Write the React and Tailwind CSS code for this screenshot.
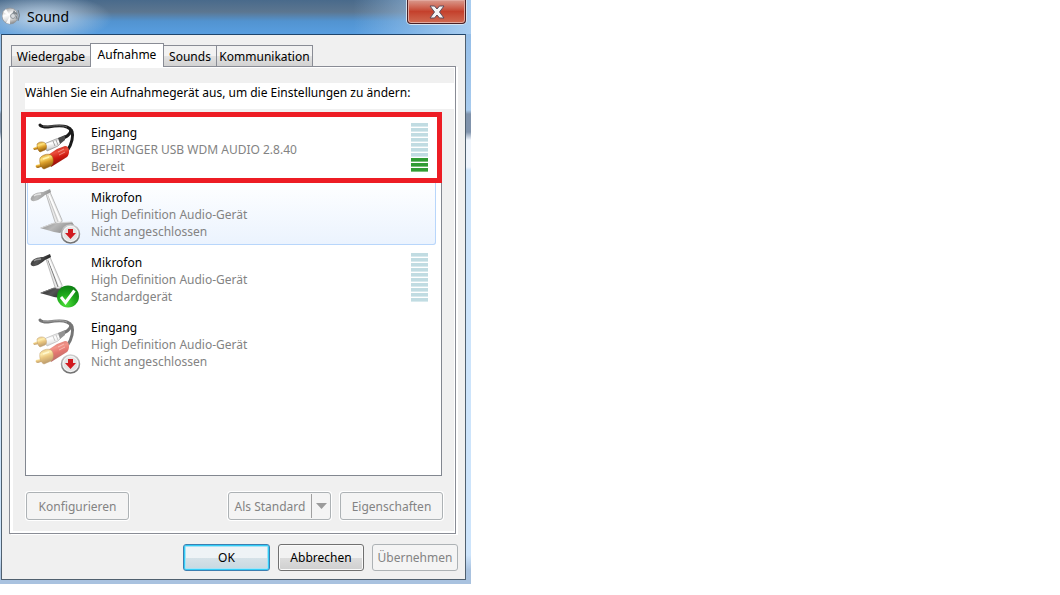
import { useState } from "react";

const TABS = [
  { id: "playback", label: "Wiedergabe", width: "w-[80px]" },
  { id: "recording", label: "Aufnahme", width: "w-[74px]" },
  { id: "sounds", label: "Sounds", width: "w-[54px]" },
  { id: "communication", label: "Kommunikation", width: "w-[97px]" },
];

const DEVICES = [
  { id: 1, name: "Eingang", driver: "BEHRINGER USB WDM AUDIO 2.8.40", status: "Bereit", icon: "line", level: 3, marked: true },
  { id: 2, name: "Mikrofon", driver: "High Definition Audio-Gerät", status: "Nicht angeschlossen", icon: "mic", badge: "unplugged", selected: true },
  { id: 3, name: "Mikrofon", driver: "High Definition Audio-Gerät", status: "Standardgerät", icon: "mic", badge: "default", level: 0 },
  { id: 4, name: "Eingang", driver: "High Definition Audio-Gerät", status: "Nicht angeschlossen", icon: "line", badge: "unplugged" },
];

const Gradients = () => (
  <svg width="0" height="0" className="absolute" aria-hidden="true">
    <defs>
      <linearGradient id="gold" x1="0" y1="0" x2="0.3" y2="1">
        <stop offset="0" stopColor="#c98a1c" />
        <stop offset="0.35" stopColor="#ffe27a" />
        <stop offset="0.6" stopColor="#dca02a" />
        <stop offset="1" stopColor="#8f5a0c" />
      </linearGradient>
      <linearGradient id="red" x1="0.3" y1="0" x2="0.6" y2="1">
        <stop offset="0" stopColor="#b5170e" />
        <stop offset="0.3" stopColor="#ea4f3c" />
        <stop offset="0.55" stopColor="#cf1a10" />
        <stop offset="1" stopColor="#6f0a06" />
      </linearGradient>
      <linearGradient id="silver" x1="0.3" y1="0" x2="0.6" y2="1">
        <stop offset="0" stopColor="#a8a8a8" />
        <stop offset="0.4" stopColor="#ffffff" />
        <stop offset="0.7" stopColor="#dddddd" />
        <stop offset="1" stopColor="#858585" />
      </linearGradient>
      <linearGradient id="dark" x1="0" y1="0" x2="1" y2="0.4">
        <stop offset="0" stopColor="#222222" />
        <stop offset="0.5" stopColor="#555555" />
        <stop offset="1" stopColor="#1c1c1c" />
      </linearGradient>
      <linearGradient id="pale" x1="0" y1="0" x2="1" y2="0.4">
        <stop offset="0" stopColor="#8a8a8a" />
        <stop offset="0.5" stopColor="#b8b8b8" />
        <stop offset="1" stopColor="#8c8c8c" />
      </linearGradient>
      <radialGradient id="green" cx="0.4" cy="0.85" r="0.9">
        <stop offset="0" stopColor="#4ee03a" />
        <stop offset="0.5" stopColor="#1ea81c" />
        <stop offset="1" stopColor="#0b7a12" />
      </radialGradient>
      <linearGradient id="ring" x1="0" y1="0" x2="0" y2="1">
        <stop offset="0" stopColor="#cfcfcf" />
        <stop offset="1" stopColor="#6f6f6f" />
      </linearGradient>
    </defs>
  </svg>
);

const LineIn = ({ faded }) => (
  <g opacity={faded ? 0.6 : 1}>
    <path d="M13 10 C14 12 17 12 21 12 C27 11 35 10 40 12 C46 14 46 20 45 25 C44 30 43 32 40 36" fill="none" stroke="#1b1b1b" strokeWidth="3" strokeLinecap="round" />
    <path d="M44 14 C44 20 39 22 32 25" fill="none" stroke="#1b1b1b" strokeWidth="3" />
    <path d="M16 11 C24 12 33 9 40 12" fill="none" stroke="#777" strokeWidth="0.8" />
    <path d="M17 29 L29 24 L33 23 L34 28 L31 31 L20 36 Z" fill="url(#silver)" stroke="#9b9b9b" strokeWidth="0.8" />
    <path d="M31 23 L38 20 L38 25 L33 29 Z" fill="#4b4b4b" />
    <path d="M26 26 L28 31 M29 25 L31 30" stroke="#8d8d8d" strokeWidth="0.8" />
    <path d="M6 33 L11 31 L12 34 L7 35 Z" fill="url(#gold)" />
    <path d="M10 29 C12 27 15 26 18 28 C20 30 20 34 18 35 L13 37 C11 36 10 32 10 29 Z" fill="url(#gold)" stroke="#9b6514" strokeWidth="0.5" />
    <path d="M21 40 L30 34 L38 31 C43 31 43 39 40 42 L24 52 Z" fill="url(#red)" />
    <path d="M31 37 L37 34 M32 40 L38 37" stroke="#f6a094" strokeWidth="0.8" />
    <path d="M9 50 L16 48 L17 51 L11 53 C9 53 8 51 9 50 Z" fill="url(#gold)" />
    <path d="M13 43 C15 40 21 38 24 40 C27 42 27 49 24 51 L17 54 C14 53 12 48 13 43 Z" fill="url(#gold)" stroke="#9b6514" strokeWidth="0.5" />
    <path d="M16 44 L22 42" stroke="#fff3ac" strokeWidth="1.5" />
  </g>
);

const Microphone = ({ faded }) => {
  const body = faded ? "url(#pale)" : "url(#dark)";
  return (
    <g>
      <path d="M13 48 L26 43 L45 42 L47 45 L33 53 L27 52 Z" fill={body} />
      <path d="M14 48 L27 43 L45 42" fill="none" stroke={faded ? "#d5d5d5" : "#777"} strokeWidth="1" />
      <path d="M19 14 L23 12 L35 40 C36 43 30 45 28 42 Z" fill="#e9e9e9" stroke="#a3a3a3" strokeWidth="0.7" />
      <path d="M21 15 L31 42" stroke={faded ? "#c5c5c5" : "#7d7d7d"} strokeWidth="1" />
      <path d="M22 15 L33 41" stroke="#ffffff" strokeWidth="1.5" />
      <path d="M4 18 C5 14 11 12 16 12 L23 9 L24 12 L18 15 C15 18 9 22 5 21 C4 20 3 19 4 18 Z" fill={body} />
      <path d="M7 16 C9 14 12 14 14 14" fill="none" stroke={faded ? "#e2e2e2" : "#999"} strokeWidth="1.5" />
    </g>
  );
};

const UnpluggedBadge = () => (
  <g>
    <circle cx="43.5" cy="54" r="9" fill="#f4f4f4" stroke="url(#ring)" strokeWidth="1.5" />
    <circle cx="43.5" cy="54" r="7" fill="#e4e4e4" />
    <path d="M41 49 h5 v4 h3 l-5.5 6 l-5.5 -6 h3 Z" fill="#d11a1f" />
  </g>
);

const DefaultBadge = () => (
  <g>
    <circle cx="41" cy="51.5" r="11" fill="url(#green)" />
    <path d="M34 52 L38.5 57.5 L47.5 45.5" fill="none" stroke="#fff" strokeWidth="3" />
  </g>
);

const DeviceIcon = ({ device }) => {
  const faded = device.badge === "unplugged";
  return (
    <svg width="58" height="65" viewBox="0 0 58 65" className="shrink-0" aria-hidden="true">
      {device.icon === "line" ? <LineIn faded={faded} /> : <Microphone faded={faded} />}
      {device.badge === "unplugged" && <UnpluggedBadge />}
      {device.badge === "default" && <DefaultBadge />}
    </svg>
  );
};

const LevelMeter = ({ level }) => (
  <div className="mt-2 mr-2 flex w-[17px] flex-col gap-px" role="meter" aria-label="Pegel" aria-valuemin={0} aria-valuemax={10} aria-valuenow={level}>
    {Array.from({ length: 10 }, (_, i) => (
      <span
        key={i}
        className={
          i >= 10 - level
            ? "h-1 border-b border-[#7cc07c] bg-[#309c33]"
            : "h-1 border-b border-[#d9eaee] bg-[#c1dce2]"
        }
      />
    ))}
  </div>
);

const DeviceRow = ({ device, selected, onSelect }) => (
  <li
    onClick={() => onSelect(device.id)}
    className={`relative flex h-[65px] rounded-[3px] ${
      selected ? "bg-linear-to-b from-white to-[#ebf3fe] shadow-[inset_0_0_0_1px_#b8d6fb]" : ""
    }`}
  >
    <DeviceIcon device={device} />
    <div className="grow pt-[9px] pl-[6px]">
      <p>{device.name}</p>
      <p className="text-[#838383]">{device.driver}</p>
      <p className="text-[#838383]">{device.status}</p>
    </div>
    {device.level !== undefined && <LevelMeter level={device.level} />}
    {device.marked && <span className="absolute -inset-x-[6px] -inset-y-[3px] z-10 border-[5px] border-[#ed1c24]" />}
  </li>
);

const disabledButton =
  "rounded-[3px] border border-[#adb2b5] bg-[#f4f4f4] text-[#838383] whitespace-nowrap";

const App = () => {
  const [activeTab, setActiveTab] = useState("recording");
  const [selectedId, setSelectedId] = useState(2);

  return (
    <div className="min-h-screen bg-white font-['Noto_Sans',sans-serif] text-[12px] leading-[17px] text-black">
      <Gradients />
      <main className="w-full max-w-[471px] bg-[linear-gradient(180deg,#8db9e6_0,#a8cbee_110px,#8093ac_114px,#8093ac_132px,#eef4fc_140px,#eef4fc_167px,#cde4fb_170px,#cde4fb_555px,#a9c2df_570px)] pr-[5px] pb-[4px] pl-px">
        <header className="-mr-[5px] -ml-px flex h-[34px] items-start justify-between bg-[radial-gradient(ellipse_70px_24px_at_42px_18px,#c3d7ea_0%,#b3cbe2b0_40%,#b3cbe200_100%),linear-gradient(90deg,transparent_75%,#a9cdf0_100%),linear-gradient(180deg,#496a8b_0%,#5c7690_35%,#5293d0_62%,#589ee0_100%)] pr-[5px] pl-[2px]">
          <div className="flex h-[34px] items-center gap-[6px]">
            <svg width="19" height="20" viewBox="0 0 19 20" aria-hidden="true">
              <circle cx="8" cy="9" r="8" fill="url(#silver)" stroke="#8f969c" strokeWidth="0.8" />
              <path d="M8 9 L1 5 L4 2 Z M8 9 L4 16 L8 17 Z" fill="#fff" opacity="0.9" />
              <path d="M9 9 L12 3 L15 7 Z" fill="#7f868c" />
              <circle cx="11" cy="9" r="2.5" fill="#d7dadd" stroke="#82898f" strokeWidth="0.8" />
              <path d="M14 5 Q16 8 14 12 M16 3 Q19 8 16 14" fill="none" stroke="#777f86" strokeWidth="1" />
            </svg>
            <h1 className="text-[14px] leading-5">Sound</h1>
          </div>
          <button
            aria-label="Schließen"
            className="flex h-6 w-[59px] items-center justify-center rounded-b-[4px] border border-t-0 border-[#4a1f24] bg-linear-to-b from-[#d9998d] via-[#c4402c] via-50% to-[#cf6a52] shadow-[0_0_0_1px_#d8e3ee,inset_0_0_0_1px_#e2a89e]"
          >
            <svg width="16" height="14" viewBox="0 0 16 14" aria-hidden="true">
              <path d="M1 1 H5.5 L8 4 L10.5 1 H15 L10.5 7 L15 13 H10.5 L8 10 L5.5 13 H1 L5.5 7 Z" fill="#f5f5f5" stroke="#5a4c5c" strokeWidth="1" />
            </svg>
          </button>
        </header>

        <section className="border border-[#50606f] border-t-[#1f456c] bg-[#f0f0f0] pt-2 pr-[9px] pb-2 pl-[7px]">
          <div role="tablist" className="flex items-end pl-[2px]">
            {TABS.map((tab) => (
              <button
                key={tab.id}
                role="tab"
                aria-selected={activeTab === tab.id}
                onClick={() => setActiveTab(tab.id)}
                className={`-mr-px border border-b-0 border-[#898c95] whitespace-nowrap ${tab.width} ${
                  activeTab === tab.id
                    ? "relative z-10 -mb-px h-6 bg-white pb-[2px]"
                    : "h-[21px] bg-linear-to-b from-[#f2f2f2] from-50% via-[#e3e3e3] via-50% to-[#d2d2d2]"
                }`}
              >
                {tab.label}
              </button>
            ))}
          </div>

          <div role="tabpanel" className="border border-[#898c95] shadow-[2px_1px_0_#fff]">
            <div className="border-t border-r border-b-2 border-l-[3px] border-white pb-[11px]">
              <p className="mt-[15px] ml-3 h-[26px] bg-white pt-px whitespace-nowrap">
                Wählen Sie ein Aufnahmegerät aus, um die Einstellungen zu ändern:
              </p>
              <ul className="mt-1 mr-3 ml-3 min-h-[363px] border border-[#828790] bg-white pt-px pr-[5px] pl-px">
                {DEVICES.map((device) => (
                  <DeviceRow key={device.id} device={device} selected={selectedId === device.id} onSelect={setSelectedId} />
                ))}
              </ul>
              <div className="mt-4 mr-[11px] ml-[13px] flex h-7 gap-[9px]">
                <button disabled className={`mr-auto w-[103px] shadow-[0_0_0_1px_#fff] ${disabledButton}`}>Konfigurieren</button>
                <div className={`flex w-[103px] items-center shadow-[0_0_0_1px_#fff] ${disabledButton}`}>
                  <button disabled className="grow">Als Standard</button>
                  <button disabled aria-label="Standard auswählen" className="flex h-6 w-[19px] items-center justify-center border-l border-[#a0a0a0]">
                    <svg width="11" height="6" viewBox="0 0 11 6" aria-hidden="true">
                      <path d="M0 0 H11 L5.5 6 Z" fill="#9b9b9b" />
                    </svg>
                  </button>
                </div>
                <button disabled className={`w-[103px] shadow-[0_0_0_1px_#fff] ${disabledButton}`}>Eigenschaften</button>
              </div>
            </div>
          </div>

          <div className="-mr-[2px] mt-[10px] flex h-[27px] justify-end gap-2">
            <button className="w-[87px] rounded-[3px] border border-[#3c7fb1] bg-linear-to-b from-[#eef3f6] from-50% via-[#d6e2e8] via-50% to-[#c6d8e1] shadow-[inset_0_0_0_1px_#33cdf6,inset_0_0_0_2px_#a5e3f7]">OK</button>
            <button className="w-[86px] rounded-[3px] border border-[#707070] bg-linear-to-b from-[#f2f2f2] from-50% via-[#dddddd] via-50% to-[#cfcfcf] shadow-[inset_0_0_0_1px_#fafafa]">Abbrechen</button>
            <button disabled className={`w-[86px] ${disabledButton}`}>Übernehmen</button>
          </div>
        </section>
      </main>
    </div>
  );
};

export default App;
